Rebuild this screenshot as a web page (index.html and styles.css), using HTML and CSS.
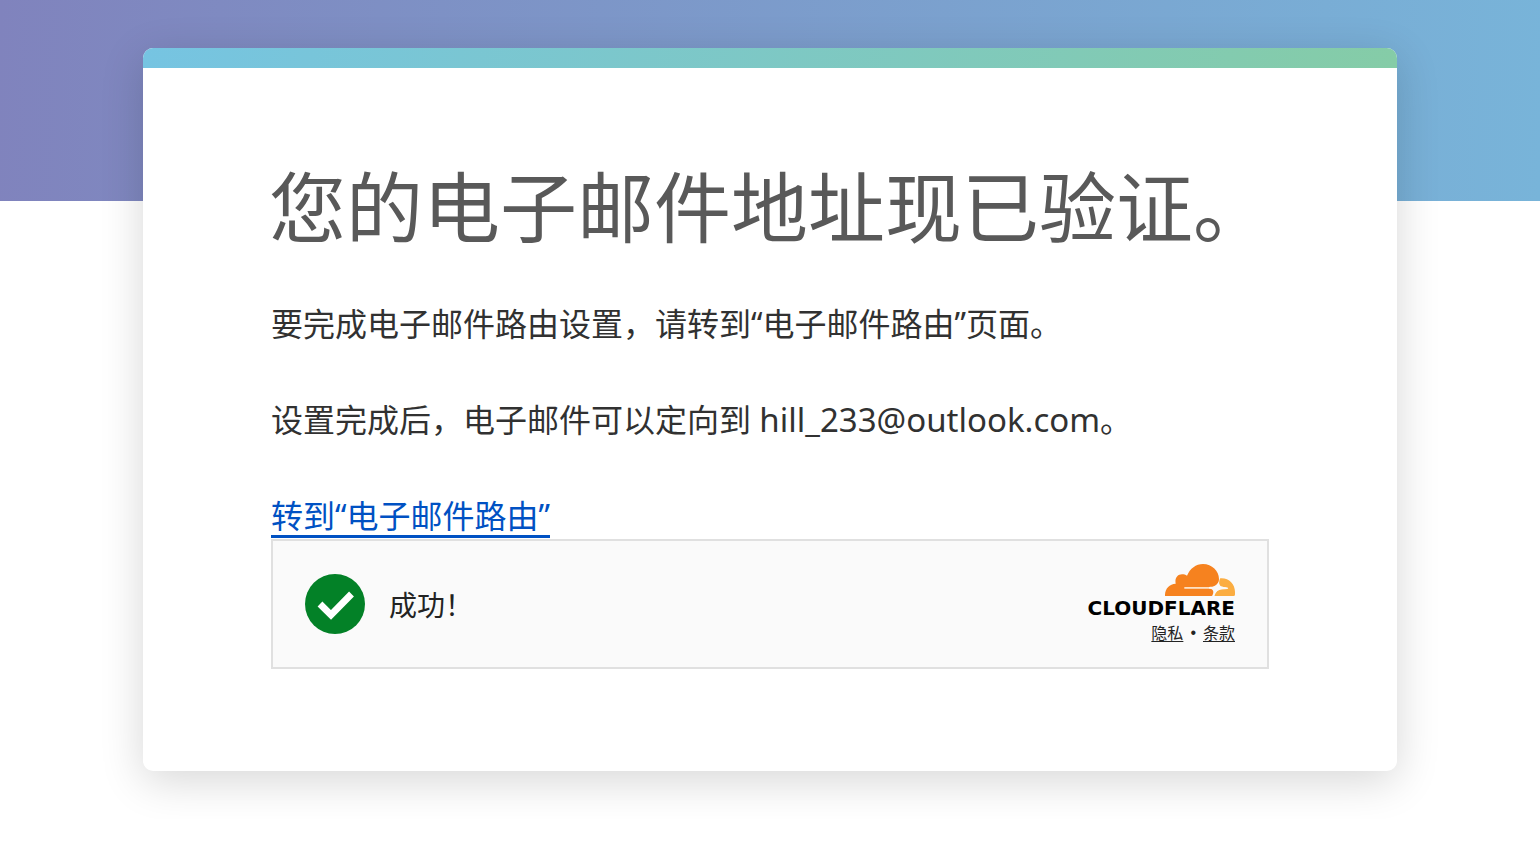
FILE: index.html
```html
<!DOCTYPE html>
<html lang="zh-CN">
<head>
<meta charset="utf-8">
<meta name="viewport" content="width=device-width, initial-scale=1">
<title>您的电子邮件地址现已验证。</title>
<link rel="stylesheet" href="styles.css">
</head>
<body>
<main class="card">
  <div class="content">
    <h1 class="title">您的电子邮件地址现已验证。</h1>
    <p class="text">要完成电子邮件路由设置，请转到“电子邮件路由”页面。</p>
    <p class="text">设置完成后，电子邮件可以定向到 <span class="email">hill_233@outlook.com</span>。</p>
    <p class="text text-last"><a class="route-link" href="#">转到“电子邮件路由”</a></p>
    <section class="widget">
      <div class="status">
        <svg class="check" viewBox="0 0 60 60" aria-hidden="true">
          <circle cx="30" cy="30" r="30" fill="#038127"/>
          <path d="M15 30L26 41L46.500 20" fill="none" stroke="#fff" stroke-width="6.800"/>
        </svg>
        <span>成功！</span>
      </div>
      <div class="brand">
        <svg class="cloud" viewBox="0 0 70 32" aria-hidden="true">
          <path fill="#f6821f" d="M0 32C-.3 25 4.200 20 10.700 19.700C9.500 14.200 12.500 10.300 17 10.300C19 10.300 20.500 10.700 22 11.700C25 4.500 31 0 38 0C47 0 54 7 54 15C54 17.500 53 19 52 20.500L48 25Q49 27 48.300 29L47.600 31Q47.300 32 46.500 32Z"/>
          <path fill="#fbad41" d="M55.200 14.300C63.500 13.500 70 19.500 70 28V30.500Q70 32 68.500 32H49.500C50.500 28.500 52.500 25.800 56 25.500L62.500 24.900Q64 24.200 62.500 23.400L57 22.800C54 22.200 53.300 18.500 55.200 14.300Z"/>
          <path fill="#fde0c3" d="M19.300 23H48V24.800H19.300Z"/>
          <path fill="#fafafa" d="M44 23C49 22.800 51.500 21.500 53.800 18C54 21.800 55.500 22.800 61 23.400L62 24.500C54 24.900 51.500 26.500 49 31C48.800 26.500 47.500 25 44 24.600Z"/>
        </svg>
        <span class="wordmark">CLOUDFLARE</span>
        <nav class="legal"><a href="#">隐私</a><span class="dot">•</span><a href="#">条款</a></nav>
      </div>
    </section>
  </div>
</main>
</body>
</html>
```
FILE: styles.css
```css
* { box-sizing: border-box; }

body {
  margin: 0;
  padding: 48px 24px;
  background: linear-gradient(92deg, #8083bd, #78b4d9) top / 100% 201px no-repeat #fff;
  color: #313131;
  font-family: "Noto Sans", "Noto Sans CJK SC", sans-serif;
}

.card {
  max-width: 1254px;
  margin: 0 auto;
  overflow: hidden;
  border-radius: 10px;
  background: #fff;
  box-shadow: 0 10px 44px rgba(0, 0, 0, .16);
}

.card::before {
  content: "";
  display: block;
  height: 20px;
  background: linear-gradient(100deg, #76c4e2, #85cca7);
}

.content { padding: 92px 128px 102px; }

.title {
  margin: 0 -2px 44px;
  color: #595959;
  font-size: 77px;
  font-weight: 400;
  line-height: 96px;
}

.text {
  margin: 0 0 48px;
  font-size: 32px;
  line-height: 48px;
}

.email {
  font-size: 33px;
  line-height: 1;
}

.text-last {
  margin: 0;
  line-height: 47px;
}

.route-link {
  display: inline-block;
  height: 46px;
  border-bottom: 3px solid #0051c3;
  color: #0051c3;
  text-decoration: none;
  vertical-align: top;
}

.widget {
  display: flex;
  align-items: center;
  justify-content: space-between;
  min-height: 130px;
  padding: 0 32px;
  border: 2px solid #e0e0e0;
  background: #fafafa;
  color: #232323;
}

.status {
  display: flex;
  align-items: center;
  gap: 24px;
  font-size: 28px;
}

.check { width: 60px; height: 60px; }

.brand {
  display: flex;
  flex-direction: column;
  align-items: flex-end;
  padding-top: 2px;
}

.cloud { width: 70px; height: 32px; }

.wordmark {
  color: #000;
  font-family: "DejaVu Sans", sans-serif;
  font-size: 20px;
  font-weight: 700;
  line-height: 24px;
}

.legal {
  display: flex;
  gap: 7px;
  font-size: 16px;
  line-height: 26px;
}

.legal a {
  color: inherit;
  text-underline-offset: 2px;
}

.dot { font-family: "Liberation Sans", sans-serif; }
```
